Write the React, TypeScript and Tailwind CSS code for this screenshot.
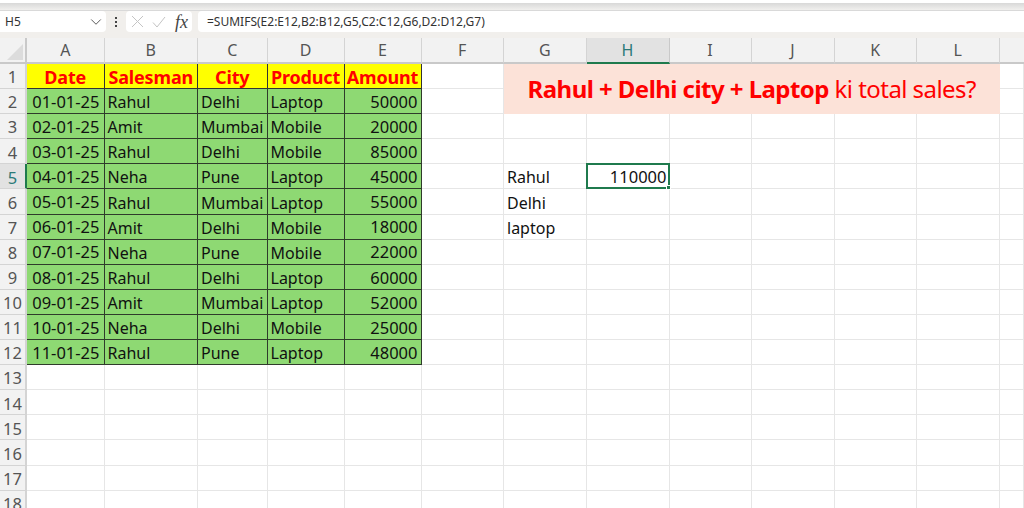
import { ChevronDown } from "lucide-react";

const columns = ["A", "B", "C", "D", "E", "F", "G", "H", "I", "J", "K", "L", ""];

const sales = [
  ["01-01-25", "Rahul", "Delhi", "Laptop", "50000"],
  ["02-01-25", "Amit", "Mumbai", "Mobile", "20000"],
  ["03-01-25", "Rahul", "Delhi", "Mobile", "85000"],
  ["04-01-25", "Neha", "Pune", "Laptop", "45000"],
  ["05-01-25", "Rahul", "Mumbai", "Laptop", "55000"],
  ["06-01-25", "Amit", "Delhi", "Mobile", "18000"],
  ["07-01-25", "Neha", "Pune", "Mobile", "22000"],
  ["08-01-25", "Rahul", "Delhi", "Laptop", "60000"],
  ["09-01-25", "Amit", "Mumbai", "Laptop", "52000"],
  ["10-01-25", "Neha", "Delhi", "Mobile", "25000"],
  ["11-01-25", "Rahul", "Pune", "Laptop", "48000"],
];

const headers = ["Date", "Salesman", "City", "Product", "Amount"];
const lookups: Record<number, string> = { 5: "Rahul", 6: "Delhi", 7: "laptop" };

function RowHead({ n }: { n: number }) {
  return (
    <div
      className={`flex items-center justify-center border-r-2 border-b pt-[3px] text-[16.5px] leading-none ${
        n === 5
          ? "border-r-[#1f7a4d] border-b-[#d4d4d4] bg-[#e2e2e2] text-[#2b7a78]"
          : "border-[#d4d4d4] bg-[#f2f2f2] text-[#555]"
      }`}
    >
      {n}
    </div>
  );
}

function Blank() {
  return <div className="border-r border-b border-[#e6e6e6] bg-white" />;
}

function SheetRow({ n }: { n: number }) {
  // data table sits in A:E, the rest of the row is free cells
  const row = n >= 2 && n <= 12 ? sales[n - 2] : null;
  const isTitleRow = n === 1 || n === 2;

  return (
    <>
      <RowHead n={n} />
      {n === 1 &&
        headers.map((h) => (
          <div
            key={h}
            className="flex items-center justify-center border-r border-b border-[#333] bg-[#ffff00] pt-[2px] text-[18px] leading-none font-bold tracking-[-0.15px] whitespace-nowrap text-[#ff0000]"
          >
            {h}
          </div>
        ))}
      {row &&
        row.map((v, i) => (
          <div
            key={i}
            className={`flex items-center border-r border-b border-[#2f3b2b] bg-[#8ed973] pt-[2px] leading-none text-[#111] ${
              i === 0
                ? "justify-end pr-[4px] text-[16.5px]"
                : i === 4
                  ? "justify-end pr-[3px] text-[16.5px]"
                  : "pl-[3px] text-[16px]"
            }`}
          >
            {v}
          </div>
        ))}
      {!row && n !== 1 && [0, 1, 2, 3, 4].map((i) => <Blank key={i} />)}

      <Blank />

      {n === 1 && (
        <div className="col-span-6 row-span-2 flex items-center justify-center bg-[#fce2d8] text-[24px] leading-none tracking-[-0.55px] whitespace-nowrap text-[#ff0000]">
          <span>
            <b>Rahul + Delhi city + Laptop</b> ki total sales?
          </span>
        </div>
      )}
      {!isTitleRow && (
        <>
          {lookups[n] ? (
            <div className="flex items-center border-r border-b border-[#e6e6e6] bg-white pt-[2px] pl-[3px] text-[16px] leading-none text-[#111]">
              {lookups[n]}
            </div>
          ) : (
            <Blank />
          )}
          {n === 5 ? (
            <div className="relative -mt-[1px] -ml-[1px] flex items-center justify-end border-2 border-[#1f7a4d] bg-white pt-[1px] pr-[1px] text-[16.5px] leading-none text-[#111]">
              110000
              <span className="absolute -right-[3px] -bottom-[3px] h-[5px] w-[5px] border border-white bg-[#1f7a4d]" />
            </div>
          ) : (
            <Blank />
          )}
          <Blank />
          <Blank />
          <Blank />
          <Blank />
        </>
      )}
      <Blank />
    </>
  );
}

export default function App() {
  return (
    <div className="flex h-[508px] w-[1024px] flex-col overflow-hidden bg-white font-['Noto_Sans',sans-serif]">
      <div className="h-[3px] shrink-0 bg-white" />
      <div className="h-[8px] shrink-0 border-b border-[#d9d9d9] bg-[linear-gradient(#d8d8d8,#f1f0ee)]" />

      {/* formula bar */}
      <div className="flex h-[27px] shrink-0 items-start gap-[6px] bg-[#f1efec]">
        <div className="flex h-[21px] w-[106px] items-center justify-between rounded-r-[4px] bg-white pr-[1px] pl-[5px] text-[12px] text-[#333]">
          H5
          <ChevronDown size={18} strokeWidth={1.3} className="text-[#555]" />
        </div>
        <div className="flex h-[21px] w-[8px] flex-col items-center justify-center gap-[2px]">
          <span className="h-[2px] w-[2px] bg-[#444]" />
          <span className="h-[2px] w-[2px] bg-[#444]" />
          <span className="h-[2px] w-[2px] bg-[#444]" />
        </div>
        <div className="flex h-[21px] w-[66px] items-center rounded-[4px] bg-white pl-[5px]">
          <svg width="13" height="13" viewBox="0 0 13 13" fill="none" stroke="#c4c4c4" strokeWidth="1">
            <path d="M1 1l11 11M12 1L1 12" />
          </svg>
          <svg className="ml-[8px]" width="14" height="12" viewBox="0 0 14 12" fill="none" stroke="#c4c4c4" strokeWidth="1">
            <path d="M1 6.5l4 4.5L13 1" />
          </svg>
          <span className="ml-[9px] font-['Liberation_Serif',serif] text-[18px] leading-none text-[#444] italic">fx</span>
        </div>
        <div className="flex h-[21px] flex-1 items-center rounded-l-[4px] bg-white pl-[9px] text-[12px] text-[#333]">
          =SUMIFS(E2:E12,B2:B12,G5,C2:C12,G6,D2:D12,G7)
        </div>
      </div>

      {/* sheet */}
      <div className="grid shrink-0 grid-cols-[27px_77.5px_93.5px_69.5px_77px_77px_82.5px_82.5px_83px_82px_83px_82.5px_82.5px_24.5px] grid-rows-[26px_repeat(18,25.1px)]">
        <div className="flex items-end justify-end border-r-2 border-b-2 border-[#c9c9c9] bg-[#f2f2f2] p-[2px]">
          <span className="h-0 w-0 border-b-[16px] border-l-[16px] border-b-[#dcdcdc] border-l-transparent" />
        </div>
        {columns.map((c, i) => (
          <div
            key={i}
            className={`flex items-center justify-center border-b-2 text-[16px] ${
              c === "H"
                ? "border-r border-r-[#c9c9c9] border-b-[#1f7a4d] bg-[#e2e2e2] text-[#2b7a78]"
                : c
                  ? "border-r border-r-[#d4d4d4] border-b-[#c9c9c9] bg-[#f2f2f2] text-[#555]"
                  : "border-b-[#c9c9c9] bg-[#f2f2f2]"
            }`}
          >
            {c}
          </div>
        ))}
        {Array.from({ length: 18 }, (_, i) => (
          <SheetRow key={i} n={i + 1} />
        ))}
      </div>
    </div>
  );
}
